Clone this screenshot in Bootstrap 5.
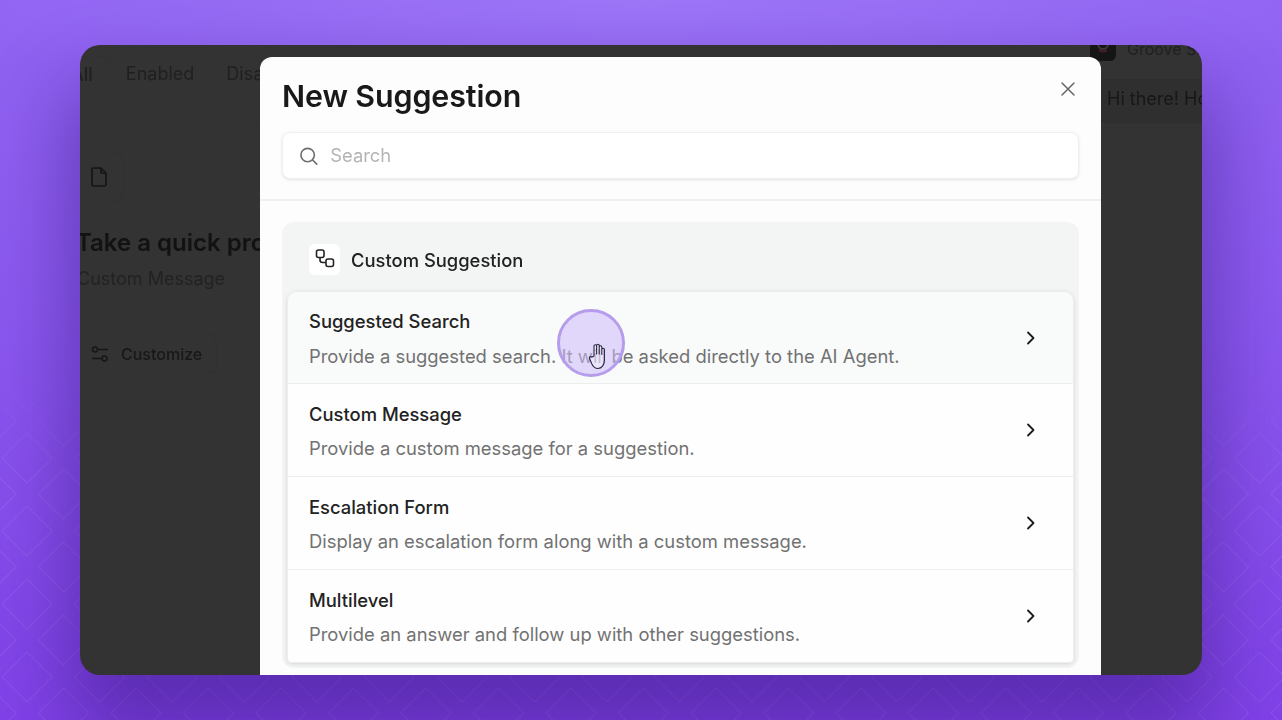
<!DOCTYPE html>
<html lang="en">
<head>
<meta charset="UTF-8">
<meta name="viewport" content="width=device-width, initial-scale=1.0">
<title>New Suggestion</title>
<link href="https://cdn.jsdelivr.net/npm/bootstrap@5.3.0/dist/css/bootstrap.min.css" rel="stylesheet">
<style>
  html, body { height: 720px; }
  body {
    margin: 0; overflow: hidden; position: relative;
    font-family: Inter, "Liberation Sans", sans-serif;
    background: radial-gradient(ellipse 700px 120px at 50% 0, #9d76f8 0%, rgba(157, 118, 248, 0) 100%), linear-gradient(180deg, #9164f2 0%, #8b58ef 45%, #8142e8 100%);
  }
  .bg-lines { position: absolute; inset: 0; width: 1282px; height: 720px; }
  .stage { position: relative; height: 720px; padding: 45px 80px; }

  /* dimmed app behind the modal */
  .app-window {
    position: relative; height: 630px; overflow: hidden; border-radius: 20px;
    background: #333; color: #181818;
    box-shadow: 0 50px 80px 10px rgba(45, 15, 110, .45);
  }
  .app-back { filter: blur(.5px); height: 100%; }
  .tab-row { height: 83px; margin-left: -40px; padding-top: 11px; border-bottom: 1px solid #313131; font-size: 18px; color: #202020; }
  .tab-on { height: 36px; padding: 0 16px 0 30px; line-height: 36px; border: 1px solid #313131; border-radius: 8px; font-weight: 500; }
  .tab-plain { padding: 0 16px; line-height: 36px; }
  .preview-col { width: 180px; }
  .doc-box { width: 44px; height: 48px; margin-top: 25px; padding-right: 6px; border: 1px solid #313131; border-left: 0; border-radius: 0 8px 8px 0; }
  .preview-title { margin: 26px 0 0 -4px; font-size: 24px; line-height: 32px; font-weight: 600; white-space: nowrap; color: #121212; }
  .preview-sub { margin: 7px 0 0 -3px; font-size: 18px; line-height: 26px; white-space: nowrap; color: #222; }
  .customize { width: 137px; height: 40px; margin-top: 42px; gap: 12px; padding-left: 11px; border: 1px solid #313131; border-left: 0; border-radius: 0 8px 8px 0; font-size: 16px; font-weight: 500; }
  .groove { position: absolute; left: 1010px; top: -9px; gap: 11px; font-size: 16px; color: #1f1f1f; white-space: nowrap; }
  .groove-logo { width: 26px; height: 25px; border-radius: 6px; background: #151515; line-height: 0; }
  .hi-band { position: absolute; left: 1021px; right: 0; top: 34px; height: 44px; padding-left: 6px; line-height: 40px; font-size: 18px; white-space: nowrap; overflow: hidden; background: #2f2f2f; color: #171717; }

  /* modal */
  .suggest-modal {
    position: absolute; left: 180px; top: 12px; width: 841px; height: 640px;
    border: 0; border-radius: 12px; background: #fdfdfd;
  }
  .modal-top { height: 144px; padding: 20px 22px 0 22px; border-bottom: 2px solid #f0f0f0; }
  .modal-heading { margin: 0; font-size: 30.400px; line-height: 38px; font-weight: 600; letter-spacing: -.1px; color: #191919; }
  .close-x { position: absolute; left: 800px; top: 24px; padding: 0; border: 0; background: none; line-height: 0; }
  .search-box {
    height: 47px; margin-top: 17px; padding-left: 16px; gap: 12px;
    border: 1px solid #efefef; border-radius: 8px; background: #fff;
    box-shadow: 0 1px 3px rgba(0, 0, 0, .1);
  }
  .search-box input { border: 0; padding: 1px 0 0; font-size: 18.400px; background: transparent; box-shadow: none; }
  .search-box input::placeholder { color: #b4b4b4; }
  .group-card { margin: 21px 22px 0 22px; padding: 0 5px 5px; border: 0; border-radius: 12px; background: #f3f4f4; }
  .group-head { height: 69px; padding: 5px 0 0 22px; gap: 11px; font-size: 18.400px; font-weight: 500; color: #222; }
  .group-head span { padding-top: 4px; }
  .group-icon { width: 31px; height: 31px; border-radius: 6px; background: #fff; }
  .item-list { border-radius: 10px; box-shadow: 0 1px 4px rgba(0, 0, 0, .12); }
  .item-list .list-group-item { height: 93px; padding: 0 37px 0 21px; border-color: #ededed; background: #fefefe; }
  .item-list .item-hover { background: #f9fafa; }
  .item-text { align-self: flex-start; padding-top: 17px; }
  .item-hover .item-text { padding-top: 16px; }
  .item-name { font-size: 18.400px; line-height: 26px; font-weight: 500; color: #222; }
  .item-desc { margin-top: 8px; font-size: 18.400px; line-height: 26px; color: #727272; }
  .item-hover .item-desc { margin-top: 9px; }

  /* recorded pointer */
  .click-ring {
    position: absolute; left: 557px; top: 309px; width: 68px; height: 68px;
    border: 3px solid #b59cec; border-radius: 50%; background: rgba(205, 185, 250, .55);
  }
  .hand { position: absolute; left: 588px; top: 343px; }
</style>
</head>
<body>
  <svg class="bg-lines" aria-hidden="true">
    <defs>
      <pattern id="diamonds" width="72.500" height="73" x="-9" y="-16" patternUnits="userSpaceOnUse">
        <path d="M36 11 61 36 36 61 11 36Z M0 47 25 72 0 97-25 72Z M72.500 47 97.500 72 72.500 97 47.500 72Z M0-26 25-1 0 24-25-1Z M72.500-26 97.500-1 72.500 24 47.500-1Z" fill="none" stroke="#fff" stroke-opacity=".085" stroke-width="1"/>
      </pattern>
      <linearGradient id="fade" x1="0" y1="0" x2="0" y2="1">
        <stop offset=".5" stop-color="#fff" stop-opacity="0"/>
        <stop offset=".66" stop-color="#fff" stop-opacity="1"/>
      </linearGradient>
      <mask id="fadeMask"><rect width="1282" height="720" fill="url(#fade)"/></mask>
    </defs>
    <rect width="1282" height="720" fill="url(#diamonds)" mask="url(#fadeMask)"/>
  </svg>

  <div class="stage">
    <div class="app-window">
      <div class="app-back">
        <div class="tab-row d-flex">
          <div class="tab-on">All</div>
          <div class="tab-plain">Enabled</div>
          <div class="tab-plain">Disabled</div>
        </div>
        <div class="preview-col">
          <div class="doc-box d-flex align-items-center justify-content-center">
            <svg width="20" height="22" viewBox="0 0 20 22" fill="none" stroke="#161616" stroke-width="1.700" stroke-linejoin="round"><path d="M3 3.500A1.500 1.500 0 0 1 4.500 2H12l5 5v11.500a1.500 1.500 0 0 1-1.500 1.500h-11A1.500 1.500 0 0 1 3 18.500Z"/><path d="M12 2v5h5"/></svg>
          </div>
          <div class="preview-title">Take a quick product tour</div>
          <div class="preview-sub">Custom Message</div>
          <div class="customize d-flex align-items-center">
            <svg width="18" height="18" viewBox="0 0 18 18" fill="none" stroke="#161616" stroke-width="1.500" stroke-linecap="round"><circle cx="4" cy="4.500" r="2.500"/><path d="M8 4.500h8.500M1.500 13.500H10"/><circle cx="13.500" cy="13.500" r="2.500"/></svg>
            <span>Customize</span>
          </div>
        </div>
        <div class="groove d-flex align-items-center">
          <div class="groove-logo">
            <svg width="26" height="25" viewBox="0 0 26 25" fill="none"><circle cx="13" cy="8" r="5" stroke="#3a3a3a" stroke-width="2"/><path d="M9 14a6 5 0 0 0 8 0" stroke="#4a1f28" stroke-width="2"/></svg>
          </div>
          <span>Groove Support</span>
        </div>
        <div class="hi-band">Hi there! How can I help?</div>
      </div>

      <div class="modal-content suggest-modal overflow-hidden">
        <div class="modal-top">
          <h1 class="modal-heading">New Suggestion</h1>
          <div class="search-box d-flex align-items-center">
            <svg width="20" height="20" viewBox="0 0 20 20" fill="none" stroke="#6e6e6e" stroke-width="1.700" stroke-linecap="round"><circle cx="9" cy="9" r="7"/><path d="m14.200 14.200 4.300 4.300"/></svg>
            <input class="form-control" type="text" placeholder="Search" aria-label="Search">
          </div>
        </div>
        <button class="close-x" type="button" aria-label="Close">
          <svg width="16" height="16" viewBox="0 0 16 16" stroke="#666" stroke-width="1.500" stroke-linecap="round"><path d="M2 2l12 12M14 2 2 14"/></svg>
        </button>
        <div class="card group-card">
          <div class="group-head d-flex align-items-center">
            <div class="group-icon d-flex align-items-center justify-content-center">
              <svg width="20" height="20" viewBox="0 0 20 20" fill="none" stroke="#222" stroke-width="1.600" stroke-linejoin="round"><rect x="1.500" y="1" width="7.500" height="7.500" rx="2"/><rect x="11" y="10" width="7.500" height="7.500" rx="2"/><path d="M5 8.500v2.500a2.500 2.500 0 0 0 2.500 2.500H11"/></svg>
            </div>
            <span>Custom Suggestion</span>
          </div>
          <div class="list-group item-list">
            <div class="list-group-item item-hover d-flex justify-content-between align-items-center">
              <div class="item-text">
                <div class="item-name">Suggested Search</div>
                <div class="item-desc">Provide a suggested search. It will be asked directly to the AI Agent.</div>
              </div>
              <svg width="10" height="14" viewBox="0 0 10 14" fill="none" stroke="#1c1c1c" stroke-width="1.800" stroke-linecap="round" stroke-linejoin="round"><path d="m2 1.500 5.500 5.500L2 12.500"/></svg>
            </div>
            <div class="list-group-item d-flex justify-content-between align-items-center">
              <div class="item-text">
                <div class="item-name">Custom Message</div>
                <div class="item-desc">Provide a custom message for a suggestion.</div>
              </div>
              <svg width="10" height="14" viewBox="0 0 10 14" fill="none" stroke="#1c1c1c" stroke-width="1.800" stroke-linecap="round" stroke-linejoin="round"><path d="m2 1.500 5.500 5.500L2 12.500"/></svg>
            </div>
            <div class="list-group-item d-flex justify-content-between align-items-center">
              <div class="item-text">
                <div class="item-name">Escalation Form</div>
                <div class="item-desc">Display an escalation form along with a custom message.</div>
              </div>
              <svg width="10" height="14" viewBox="0 0 10 14" fill="none" stroke="#1c1c1c" stroke-width="1.800" stroke-linecap="round" stroke-linejoin="round"><path d="m2 1.500 5.500 5.500L2 12.500"/></svg>
            </div>
            <div class="list-group-item d-flex justify-content-between align-items-center">
              <div class="item-text">
                <div class="item-name">Multilevel</div>
                <div class="item-desc">Provide an answer and follow up with other suggestions.</div>
              </div>
              <svg width="10" height="14" viewBox="0 0 10 14" fill="none" stroke="#1c1c1c" stroke-width="1.800" stroke-linecap="round" stroke-linejoin="round"><path d="m2 1.500 5.500 5.500L2 12.500"/></svg>
            </div>
          </div>
        </div>
      </div>
    </div>
  </div>

  <div class="click-ring"></div>
  <svg class="hand" width="20" height="27" viewBox="0 0 20 27" fill="#fff" fill-opacity=".35" stroke="#2b2540" stroke-width="1.100" stroke-linejoin="round" stroke-linecap="round"><path d="M6 13V3a1.300 1.300 0 0 1 2.600 0v8-8.500a1.300 1.300 0 0 1 2.600 0V11 4a1.300 1.300 0 0 1 2.600 0v7.500-5a1.300 1.300 0 0 1 2.600 0V17c0 5-2.800 8.500-6.500 8.500-3 0-4.600-1.500-6-4.500L1.500 15.500c-.7-1.500 1.300-2.500 2.300-1.300Z"/></svg>
  <script src="https://cdn.jsdelivr.net/npm/bootstrap@5.3.0/dist/js/bootstrap.bundle.min.js"></script>
</body>
</html>
